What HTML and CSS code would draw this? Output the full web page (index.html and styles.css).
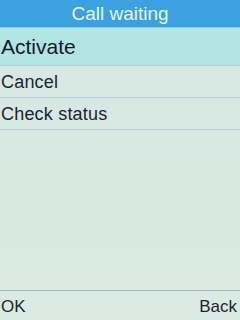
FILE: index.html
```html
<!DOCTYPE html>
<html>
<head>
<meta charset="utf-8">
<link rel="stylesheet" href="styles.css">
</head>
<body>
<div class="screen">
  <div class="header">Call waiting</div>
  <ul class="menu">
    <li class="item selected">Activate</li>
    <li class="item">Cancel</li>
    <li class="item">Check status</li>
  </ul>
  <div class="footer">
    <span>OK</span>
    <span>Back</span>
  </div>
</div>
</body>
</html>
```
FILE: styles.css
```css
html, body {
  margin: 0;
  padding: 0;
}
body {
  width: 240px;
  height: 320px;
  overflow: hidden;
  font-family: "Liberation Sans", Arial, sans-serif;
}
.screen {
  width: 240px;
  height: 320px;
  display: flex;
  flex-direction: column;
  background: linear-gradient(180deg, #d5e8e1 0%, #d8e9e2 60%, #dbebe4 100%);
  color: #1c2433;
}
.header {
  height: 28px;
  background: #3ba2df;
  color: #e8f4fb;
  font-size: 19px;
  line-height: 28px;
  text-align: center;
  border-bottom: 1px solid #8cc8e0;
  box-sizing: border-box;
}
.menu {
  list-style: none;
  margin: 0;
  padding: 0;
  flex: 1;
}
.item {
  height: 31px;
  line-height: 32px;
  font-size: 18px;
  letter-spacing: 0.2px;
  padding-left: 1px;
  border-bottom: 1px solid #b3cfd9;
}
.item.selected {
  height: 37px;
  line-height: 37px;
  font-size: 21px;
  letter-spacing: 0;
  background: #b2e4e3;
  color: #0f1a2a;
}
.footer {
  height: 27px;
  border-top: 1px solid #9fb8c6;
  display: flex;
  justify-content: space-between;
  align-items: center;
  padding: 2px 3px 0 1px;
  font-size: 17px;
  color: #1c2433;
}
```
